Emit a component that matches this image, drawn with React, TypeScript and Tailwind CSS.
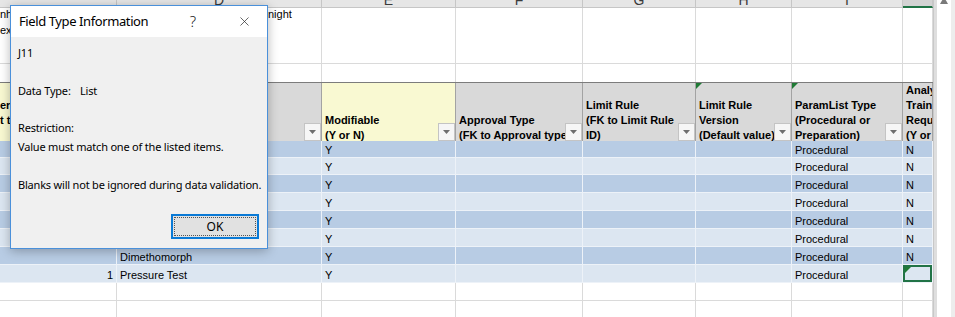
import { X } from "lucide-react";

const COLS = "grid grid-cols-[117px_205px_134px_127px_113px_96px_111px_30px]";

const letters = ["", "D", "E", "F", "G", "H", "I", ""];

type Head = { lines: string[]; yellow?: boolean; filter?: boolean; flag?: boolean; pad?: string };

const heads: Head[] = [
  { lines: ["er", "t to", ""], yellow: true, pad: "pl-0" },
  { lines: [""], filter: true },
  { lines: ["Modifiable", "(Y or N)"], yellow: true, filter: true },
  { lines: ["Approval Type", "(FK to Approval type)"], filter: true },
  { lines: ["Limit Rule", "(FK to Limit Rule", "ID)"], filter: true },
  { lines: ["Limit Rule", "Version", "(Default value)"], filter: true, flag: true },
  { lines: ["ParamList Type", "(Procedural or", "Preparation)"], filter: true, flag: true },
  { lines: ["Analyst", "Training", "Required", "(Y or N)"] },
];

const rows = [
  { h: "h-[17px]", a: "", d: "", j: "N" },
  { h: "h-[17px]", a: "", d: "", j: "N" },
  { h: "h-[18px]", a: "", d: "", j: "N" },
  { h: "h-[18px]", a: "", d: "", j: "N" },
  { h: "h-[18px]", a: "", d: "", j: "N" },
  { h: "h-[18px]", a: "", d: "", j: "N" },
  { h: "h-[18px]", a: "", d: "Dimethomorph", j: "N" },
  { h: "h-[18px]", a: "1", d: "Pressure Test", j: "" },
];

function Flag() {
  return (
    <svg width="6" height="6" viewBox="0 0 6 6" className="absolute left-0 top-0">
      <polygon points="0,0 6,0 0,6" fill="#1f7a35" />
    </svg>
  );
}

function FilterButton() {
  return (
    <div className="absolute bottom-0 right-0 flex h-[18px] w-[17px] items-center justify-center border border-[#c4c4c4] bg-[#f6f6f6]">
      <svg width="7" height="4" viewBox="0 0 7 4">
        <polygon points="0,0 7,0 3.5,4" fill="#6e6e6e" />
      </svg>
    </div>
  );
}

function Sheet() {
  const cell = "relative overflow-hidden whitespace-nowrap border-r";
  return (
    <div className="w-[933px] font-['Liberation_Sans',Arial,sans-serif] text-[11px] text-black">
      {/* column letters */}
      <div className={`${COLS} h-[8px]`}>
        {letters.map((l, i) => (
          <div
            key={i}
            className={`overflow-hidden border-r border-[#c6c6c6] text-center text-[14px] leading-[14px] text-[#3a3a3a] ${
              i === 7 ? "border-b-2 border-b-[#217346] bg-[#d3d3d3]" : "border-b bg-[#e6e6e6]"
            }`}
          >
            <div className="-mt-[7px]">{l}</div>
          </div>
        ))}
      </div>

      {/* row with wrapped text */}
      <div className={`${COLS} h-[56px]`}>
        {letters.map((_, i) => (
          <div key={i} className={`${cell} border-b border-[#dadada] bg-white leading-[16px]`}>
            {i === 0 && (
              <div className="-mt-[2px]">
                <div>nho</div>
                <div>ex</div>
              </div>
            )}
            {i === 1 && <div className="-mt-[2px] pl-[151px]">night</div>}
          </div>
        ))}
      </div>
      <div className={`${COLS} h-[18px]`}>
        {letters.map((_, i) => (
          <div key={i} className={`${cell} border-[#dadada] bg-white`} />
        ))}
      </div>

      {/* table header */}
      <div className={`${COLS} h-[59px] border-t border-[#7c7c7c]`}>
        {heads.map((h, i) => (
          <div
            key={i}
            className={`${cell} flex flex-col justify-end border-[#a3a3a3] font-bold leading-[15px] ${
              h.pad ?? "pl-[3px]"
            } ${h.yellow ? "bg-[#f9f9d2]" : "bg-[#d9d9d9]"}`}
          >
            <div className="translate-y-[2px]">
              {h.lines.map((t, k) => (
                <div key={k} className="h-[15px]">
                  {t}
                </div>
              ))}
            </div>
            {h.flag && <Flag />}
            {h.filter && <FilterButton />}
          </div>
        ))}
      </div>

      {/* banded rows */}
      {rows.map((r, n) => {
        const bg = n % 2 === 0 ? "bg-[#b8cce4]" : "bg-[#dce6f1]";
        const vals = [r.a, r.d, "Y", "", "", "", "Procedural", r.j];
        return (
          <div key={n} className={`${COLS} ${r.h}`}>
            {vals.map((v, i) => (
              <div
                key={i}
                className={`${cell} flex items-end border-b border-[#edf2f8] leading-[14px] ${bg} ${
                  i === 0 ? "justify-end pr-[3px]" : "pl-[3px]"
                }`}
              >
                {v}
                {n === 7 && i === 7 && (
                  <div className="absolute inset-0 border-2 border-[#217346]">
                    <Flag />
                  </div>
                )}
              </div>
            ))}
          </div>
        );
      })}

      {/* empty rows */}
      <div className={`${COLS} h-[18px]`}>
        {letters.map((_, i) => (
          <div key={i} className={`${cell} border-b border-[#dadada] bg-white`} />
        ))}
      </div>
      <div className={`${COLS} h-[16px]`}>
        {letters.map((_, i) => (
          <div key={i} className={`${cell} border-[#dadada] bg-white`} />
        ))}
      </div>
    </div>
  );
}

function Scrollbar() {
  return (
    <div className="flex w-[22px] border-l border-[#c8c8c8] bg-white">
      <div className="w-[3px] bg-[#dedede]" />
      <div className="flex flex-1 justify-center">
        <svg width="8" height="4" viewBox="0 0 8 4">
          <polygon points="4,-3 8,4 0,4" fill="#7a7a7a" />
        </svg>
      </div>
      <div className="w-[4px] bg-[#ededed]" />
    </div>
  );
}

function Dialog() {
  return (
    <div className="absolute left-[10px] top-[5px] flex h-[244px] w-[258px] flex-col border border-[#4a90da] bg-[#f0f0f0] font-['Noto_Sans',sans-serif] text-black shadow-[0_2px_10px_rgba(0,0,0,0.28)]">
      <div className="flex h-[31px] items-center bg-white pl-[8px]">
        <span className="text-[13px] tracking-[-0.4px]">Field Type Information</span>
        <span className="ml-auto mr-[5px] w-[46px] text-center text-[15px] font-light text-[#222]">?</span>
        <div className="flex w-[46px] justify-center">
          <X className="size-[15px] text-[#222]" strokeWidth={1.1} />
        </div>
      </div>
      <div className="whitespace-nowrap pl-[7px] pt-[7px] text-[11px] leading-[18.8px] tracking-[-0.2px]">
        <div>J11</div>
        <div>&nbsp;</div>
        <div>
          <span className="inline-block w-[62px]">Data Type:</span>List
        </div>
        <div>&nbsp;</div>
        <div>Restriction:</div>
        <div>Value must match one of the listed items.</div>
        <div>&nbsp;</div>
        <div>Blanks will not be ignored during data validation.</div>
      </div>
      <div className="mt-auto flex justify-end pb-[9px] pr-[8px]">
        <button className="flex h-[25px] w-[88px] border-2 border-[#0a7ad6] bg-[#e1e1e1] p-[1px]">
          <span className="flex flex-1 items-center justify-center border border-dotted border-[#555] text-[12px]">
            OK
          </span>
        </button>
      </div>
    </div>
  );
}

export default function App() {
  return (
    <div className="relative h-[317px] w-[955px] overflow-hidden bg-white">
      <div className="flex h-full">
        <Sheet />
        <Scrollbar />
      </div>
      <Dialog />
    </div>
  );
}
